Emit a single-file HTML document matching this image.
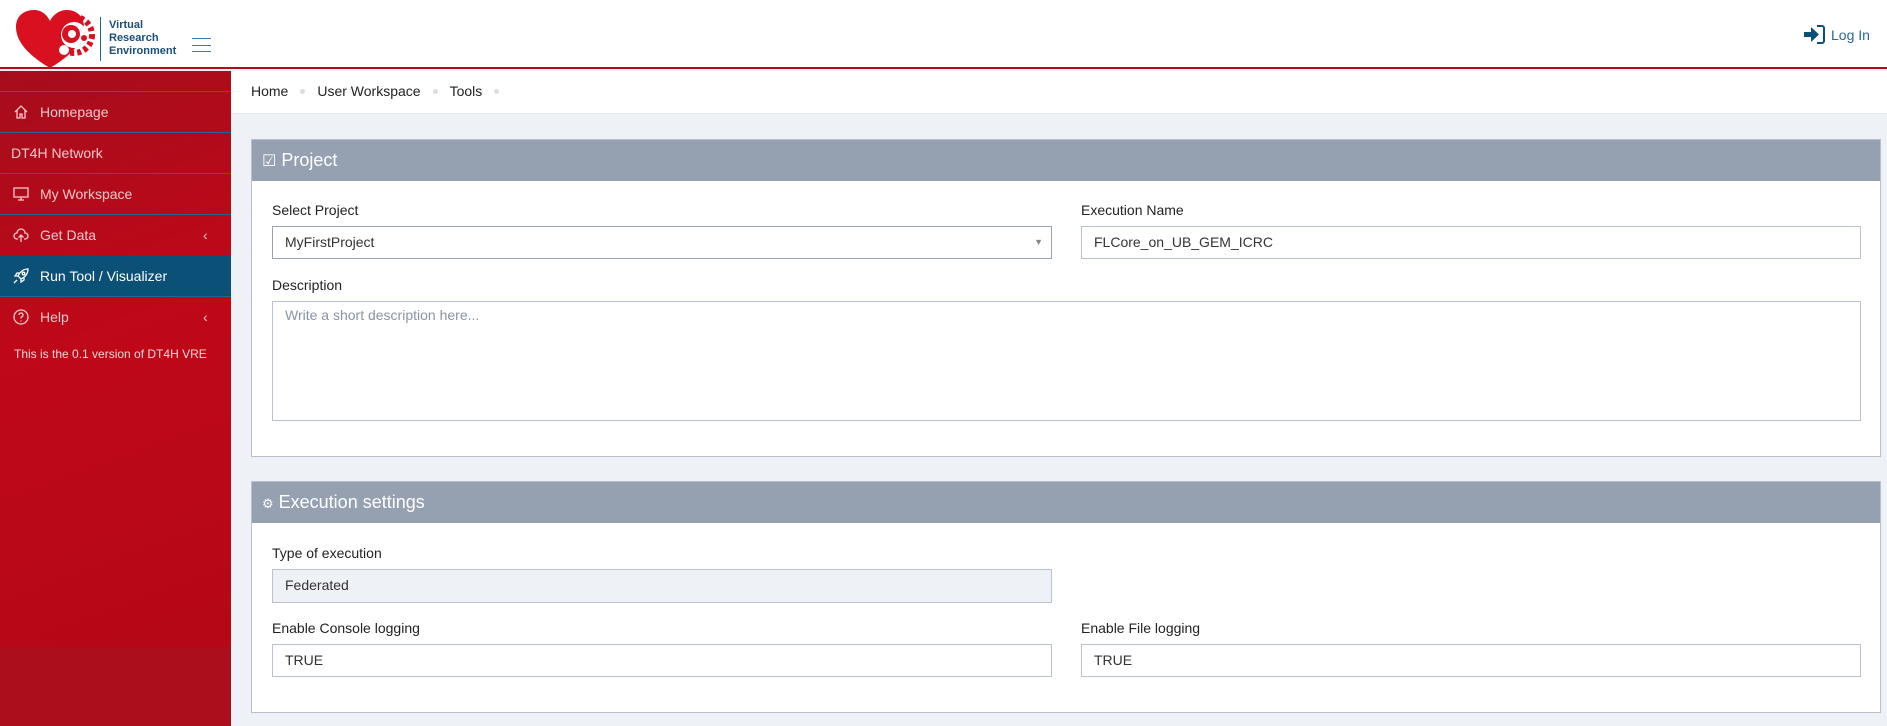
<!DOCTYPE html>
<html><head><meta charset="utf-8"><style>
*{box-sizing:border-box;margin:0;padding:0}
body{width:1887px;height:726px;overflow:hidden;font-family:"Liberation Sans",sans-serif;background:#eef1f5;position:relative;color:#333}
.hdr{position:absolute;left:0;top:0;width:1887px;height:69px;background:#fff;border-bottom:2px solid #b10c1c}
.side{position:absolute;left:0;top:71px;width:231px;height:655px;background:linear-gradient(160deg,#a60d1c 0%,#bf0818 40%,#b30716 100%)}
.side .low{position:absolute;left:0;top:576px;width:231px;height:79px;background:#ad0e1c}
.mi{position:absolute;left:0;width:231px;height:40px;border-top:1px solid #1b6a96;color:#f2c9cc;font-size:14px;line-height:40px;padding-left:40px}
.mi svg{position:absolute;left:13px;top:12px}
.act{background:#0b5077;color:#fff;border-top:1px solid #0b5077}
.chev{position:absolute;left:203px;top:0;color:#f2c9cc}
.bc{position:absolute;left:231px;top:71px;width:1656px;height:43px;background:#fff;border-bottom:1px solid #e5e8ec;font-size:14px;line-height:40px;padding-left:20px;color:#222}
.bc i{display:inline-block;width:5px;height:5px;border-radius:50%;background:#ddd;margin:0 12px 2px;vertical-align:middle}
.panel{position:absolute;left:251px;width:1630px;background:#fff;border:1px solid #b9c0cc}
.ph{height:41px;background:#95a0b1;color:#fff;font-size:18px;line-height:41px;padding-left:10px}
.lbl{position:absolute;font-size:14px;color:#222}
.inp{position:absolute;height:33px;border:1px solid #b9c2d0;font-size:14px;line-height:31px;padding-left:12px;color:#333;background:#fff}
</style></head><body>
<div class="hdr">
<svg style="position:absolute;left:14px;top:6px" width="82" height="64" viewBox="0 0 82 64"><path d="M36 62 C12 48 2 34 2 21 C2 10 10 4 20 4 C28 4 33 9 36 15 C39 9 45 4 53 4 C62 4 70 10 70 21 C70 34 60 48 36 62Z" fill="#d8101f"/><circle cx="60" cy="29" r="18" fill="none" stroke="#d8101f" stroke-width="6" stroke-dasharray="4 3"/><circle cx="60" cy="29" r="13" fill="#fff"/><circle cx="57" cy="28" r="9" fill="#d8101f"/><circle cx="58" cy="28" r="4" fill="#fff"/><circle cx="70" cy="32" r="3" fill="#d8101f"/><circle cx="50" cy="44" r="5" fill="#fff"/></svg>
<div style="position:absolute;left:100px;top:17px;width:1px;height:44px;background:#1b6a96"></div>
<div style="position:absolute;left:109px;top:19px;font-size:11px;line-height:13px;color:#1d4e75;font-weight:bold">Virtual<br>Research<br>Environment</div>
<div style="position:absolute;left:192px;top:38px;width:19px;height:14px;border-top:1px solid #3a7aa8;border-bottom:1px solid #3a7aa8"><div style="margin-top:6px;border-top:1px solid #3a7aa8"></div></div>
<svg style="position:absolute;left:1803px;top:25px" width="22" height="19" viewBox="0 0 22 19"><path d="M1 7h7V2l8 7.5-8 7.5v-5H1z" fill="#0b5077"/><path d="M14 1h5a2 2 0 0 1 2 2v13a2 2 0 0 1-2 2h-5" fill="none" stroke="#0b5077" stroke-width="2"/></svg>
<div style="position:absolute;left:1831px;top:27px;font-size:14px;color:#2a6a98">Log In</div>
</div>
<div class="side"><div class="low"></div>
<div class="mi" style="top:20px"><svg width="16" height="16" viewBox="0 0 16 16" fill="none" stroke="#f2c9cc" stroke-width="1.3"><path d="M2 8 8 2l6 6M4 6.5V14h3v-4h2v4h3V6.5"/></svg>Homepage</div>
<div class="mi" style="top:61px;padding-left:11px">DT4H Network</div>
<div class="mi" style="top:102px"><svg width="16" height="16" viewBox="0 0 16 16" fill="none" stroke="#f2c9cc" stroke-width="1.3"><rect x="1" y="2" width="14" height="9"/><path d="M8 11v3M5 14h6"/></svg>My Workspace</div>
<div class="mi" style="top:143px"><svg width="16" height="16" viewBox="0 0 16 16" fill="none" stroke="#f2c9cc" stroke-width="1.3"><path d="M5 12H4a3 3 0 0 1 0-6 4 4 0 0 1 8 0 3 3 0 0 1 0 6h-1M8 15V8M5.5 10.5 8 8l2.5 2.5"/></svg>Get Data<span class="chev">‹</span></div>
<div class="mi act" style="top:184px"><svg width="16" height="16" viewBox="0 0 16 16" fill="none" stroke="#fff" stroke-width="1.3"><path d="M15 1c-5 0-8 3-10 7l3 3c4-2 7-5 7-10zM5 8H2l2-3h3M8 11v3l3-2V9M4 12l-3 3"/><circle cx="10.5" cy="5.5" r="1.3"/></svg>Run Tool / Visualizer</div>
<div class="mi" style="top:225px"><svg width="16" height="16" viewBox="0 0 16 16" fill="none" stroke="#f2c9cc" stroke-width="1.3"><circle cx="8" cy="8" r="7"/><path d="M6 6a2 2 0 1 1 2.5 2c-.5.2-.5.7-.5 1.5M8 11.5v1"/></svg>Help<span class="chev">‹</span></div>
<div style="position:absolute;left:14px;top:276px;font-size:12px;color:#f4d6d8">This is the 0.1 version of DT4H VRE</div>
</div>
<div class="bc">Home<i></i>User Workspace<i></i>Tools<i></i></div>
<div class="panel" style="top:139px;height:318px">
<div class="ph"><span style="font-size:16px">☑</span> Project</div>
<div class="lbl" style="left:20px;top:62px">Select Project</div>
<div class="inp" style="left:20px;top:86px;width:780px;border-color:#9aa3b0">MyFirstProject<span style="position:absolute;right:8px;top:0;font-size:9px;color:#888">▼</span></div>
<div class="lbl" style="left:829px;top:62px">Execution Name</div>
<div class="inp" style="left:829px;top:86px;width:780px">FLCore_on_UB_GEM_ICRC</div>
<div class="lbl" style="left:20px;top:137px">Description</div>
<div class="inp" style="left:20px;top:161px;width:1589px;height:120px;color:#8a94a3;line-height:26px">Write a short description here...</div>
</div>
<div class="panel" style="top:481px;height:232px">
<div class="ph"><span style="font-size:13px">⚙</span> Execution settings</div>
<div class="lbl" style="left:20px;top:63px">Type of execution</div>
<div class="inp" style="left:20px;top:87px;width:780px;background:#eef1f5;height:34px">Federated</div>
<div class="lbl" style="left:20px;top:138px">Enable Console logging</div>
<div class="inp" style="left:20px;top:162px;width:780px">TRUE</div>
<div class="lbl" style="left:829px;top:138px">Enable File logging</div>
<div class="inp" style="left:829px;top:162px;width:780px">TRUE</div>
</div>
</body></html>
